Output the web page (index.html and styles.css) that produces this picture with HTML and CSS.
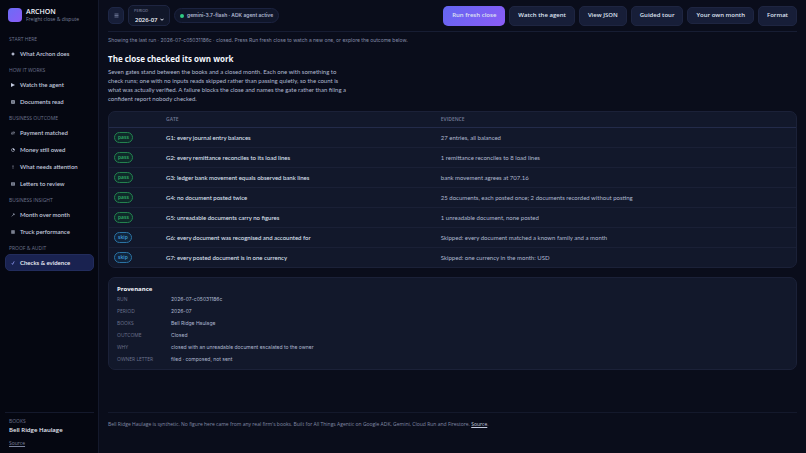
FILE: index.html
```html
<!DOCTYPE html>
<html lang="en">
<head>
  <meta charset="UTF-8">
  <meta name="viewport" content="width=device-width, initial-scale=1.0">
  <title>Archon - Checks &amp; evidence</title>
  <link rel="stylesheet" href="styles.css">
</head>
<body>
  <aside class="sidebar">
    <div class="brand">
      <span class="brand-mark"></span>
      <div>
        <div class="brand-name">ARCHON</div>
        <div class="brand-sub">Freight close &amp; dispute</div>
      </div>
    </div>

    <nav class="nav">
      <div class="nav-label">Start here</div>
      <a class="nav-item" href="#about"><svg viewBox="0 0 10 10"><path d="M5 0l1.800 3.200L10 5 6.800 6.800 5 10 3.200 6.800 0 5l3.200-1.800z" fill="currentColor"/></svg>What Archon does</a>
      <div class="nav-label">How it works</div>
      <a class="nav-item" href="#agent"><svg viewBox="0 0 10 10"><path d="M0 0l10 5-10 5z" fill="currentColor"/></svg>Watch the agent</a>
      <a class="nav-item" href="#documents"><svg viewBox="0 0 10 10"><path d="M1 1.500h8v7H1zM1 5h8M5 1.500v7" fill="none" stroke="currentColor" stroke-width="1.600"/></svg>Documents read</a>
      <div class="nav-label">Business outcome</div>
      <a class="nav-item" href="#payment"><svg viewBox="0 0 10 10"><path d="M1 3.300h8M7 1.300l2 2-2 2M9 7H1M3 5L1 7l2 2" fill="none" stroke="currentColor" stroke-width="1.200"/></svg>Payment matched</a>
      <a class="nav-item" href="#owed"><svg viewBox="0 0 10 10"><circle cx="5" cy="5" r="3.800" fill="none" stroke="currentColor" stroke-width="1.400"/><path d="M5 1v4h4a4 4 0 0 0-4-4z" fill="currentColor"/></svg>Money still owed</a>
      <a class="nav-item" href="#attention"><svg viewBox="0 0 10 10"><path d="M5 1v5.500M5 7.800V9.300" fill="none" stroke="currentColor" stroke-width="1.500"/></svg>What needs attention</a>
      <a class="nav-item" href="#letters"><svg viewBox="0 0 10 10"><path d="M1 1.500h8v7H1zM1 3.800h8M1 6.200h8" fill="none" stroke="currentColor" stroke-width="1.300"/></svg>Letters to review</a>
      <div class="nav-label">Business insight</div>
      <a class="nav-item" href="#months"><svg viewBox="0 0 10 10"><path d="M2 8.500l6-6M4.800 2H8v3.200" fill="none" stroke="currentColor" stroke-width="1.400"/></svg>Month over month</a>
      <a class="nav-item" href="#trucks"><svg viewBox="0 0 10 10"><path d="M1 1h8v8H1zM1 3.700h8M1 6.300h8M3.700 1v8M6.300 1v8" fill="none" stroke="currentColor"/></svg>Truck performance</a>
      <div class="nav-label">Proof &amp; audit</div>
      <a class="nav-item active" href="#checks"><svg viewBox="0 0 10 10"><path d="M2 5.500L4 8.500 8 1" fill="none" stroke="currentColor" stroke-width="1.800"/></svg>Checks &amp; evidence</a>
    </nav>

    <div class="side-foot">
      <div class="side-label">Books</div>
      <div class="side-name">Bell Ridge Haulage</div>
      <a class="side-link" href="#source">Source</a>
    </div>
  </aside>

  <main class="main">
    <header class="topbar">
      <button class="menu" type="button" aria-label="Menu"><svg viewBox="0 0 10 10"><path d="M1 2h8M1 5h8M1 8h8" stroke="currentColor" stroke-width="1.500"/></svg></button>
      <div class="period">
        <label for="period">Period</label>
        <div class="period-row">
          <select id="period">
            <option>2026-07</option>
          </select>
          <svg viewBox="0 0 10 10"><path d="M1 3l4 4 4-4" fill="none" stroke="currentColor" stroke-width="2.500"/></svg>
        </div>
      </div>
      <div class="agent"><span class="dot"></span>gemini-3.7-flash · ADK agent active</div>
      <div class="actions">
        <button class="btn primary" type="button">Run fresh close</button>
        <button class="btn" type="button">Watch the agent</button>
        <button class="btn" type="button">View JSON</button>
        <button class="btn" type="button">Guided tour</button>
        <a class="btn btn-link" href="#own-month">Your own month</a>
        <button class="btn" type="button">Format</button>
      </div>
    </header>

    <p class="status">Showing the last run · 2026-07-c05031186c · closed. Press Run fresh close to watch a new one, or explore the outcome below.</p>

    <h1>The close checked its own work</h1>
    <p class="lead">Seven gates stand between the books and a closed month. Each one with something to check runs; one with no inputs reads skipped rather than passing quietly, so the count is what was actually verified. A failure blocks the close and names the gate rather than filing a confident report nobody checked.</p>

    <div class="card">
      <table class="gates">
        <thead>
          <tr><th class="col-state"></th><th class="col-gate">Gate</th><th>Evidence</th></tr>
        </thead>
        <tbody>
          <tr><td><span class="pill pass">pass</span></td><td class="gate">G1: every journal entry balances</td><td>27 entries, all balanced</td></tr>
          <tr><td><span class="pill pass">pass</span></td><td class="gate">G2: every remittance reconciles to its load lines</td><td>1 remittance reconciles to 8 load lines</td></tr>
          <tr><td><span class="pill pass">pass</span></td><td class="gate">G3: ledger bank movement equals observed bank lines</td><td>bank movement agrees at 707.16</td></tr>
          <tr><td><span class="pill pass">pass</span></td><td class="gate">G4: no document posted twice</td><td>25 documents, each posted once; 2 documents recorded without posting</td></tr>
          <tr><td><span class="pill pass">pass</span></td><td class="gate">G5: unreadable documents carry no figures</td><td>1 unreadable document, none posted</td></tr>
          <tr><td><span class="pill skip">skip</span></td><td class="gate">G6: every document was recognised and accounted for</td><td>Skipped: every document matched a known family and a month</td></tr>
          <tr><td><span class="pill skip">skip</span></td><td class="gate">G7: every posted document is in one currency</td><td>Skipped: one currency in the month: USD</td></tr>
        </tbody>
      </table>
    </div>

    <section class="card provenance">
      <h2>Provenance</h2>
      <dl>
        <dt>Run</dt><dd>2026-07-c05031186c</dd>
        <dt>Period</dt><dd>2026-07</dd>
        <dt>Books</dt><dd>Bell Ridge Haulage</dd>
        <dt>Outcome</dt><dd>Closed</dd>
        <dt>Why</dt><dd>closed with an unreadable document escalated to the owner</dd>
        <dt>Owner letter</dt><dd>filed · composed, not sent</dd>
      </dl>
    </section>

    <footer class="footer">Bell Ridge Haulage is synthetic. No figure here came from any real firm's books. Built for All Things Agentic on Google ADK, Gemini, Cloud Run and Firestore. <a href="#source">Source</a>.</footer>
  </main>
</body>
</html>
```
FILE: styles.css
```css
* {
  box-sizing: border-box;
}
body {
  margin: 0;
  min-height: 100vh;
  display: flex;
  font-family: "Open Sans", sans-serif;
  font-size: 5px;
  line-height: 9px;
  color: #b0b8d0;
  background: #0a0d1b;
}
h1, h2, p, dl, dd {
  margin: 0;
}
a {
  color: inherit;
}
button, select {
  font-family: inherit;
}
.agent, .status, .provenance dd {
  font-family: Inter, sans-serif;
}
.nav-item, .lead, .gates td {
  font-family: Lato, sans-serif;
  font-size: 6px;
}

/* sidebar */
.sidebar {
  width: 99px;
  flex-shrink: 0;
  display: flex;
  flex-direction: column;
  padding: 7px 4px 5px 5px;
  background: #050711;
  border-right: 1px solid #14192c;
}
.brand {
  display: flex;
  align-items: center;
  gap: 4px;
  height: 16px;
  padding-left: 3px;
}
.brand-mark {
  width: 14px;
  height: 14px;
  border-radius: 4px;
  background: linear-gradient(135deg, #6b6cf6, #8b5cf6);
}
.brand-name {
  font-size: 7px;
  line-height: 8px;
  font-weight: 600;
  color: #f1f3fb;
}
.brand-sub {
  line-height: 7px;
  color: #7b839d;
}
.nav {
  margin-top: 8px;
}
.nav-label {
  height: 14px;
  padding: 5px 4px 0;
  line-height: 6px;
  text-transform: uppercase;
  color: #6b728d;
}
.nav-item {
  display: flex;
  align-items: center;
  gap: 5px;
  height: 17px;
  padding: 0 5px;
  border: 1px solid transparent;
  border-radius: 5px;
  font-weight: 600;
  color: #c2c9de;
  text-decoration: none;
}
.nav-item svg {
  width: 4px;
  height: 4px;
}
.nav-item.active {
  color: #f1f3fb;
  background: #192250;
  border-color: #222c5c;
}
.nav-item.active svg {
  color: #98a2ff;
}
.side-foot {
  margin-top: auto;
  padding: 5px 4px 0;
  border-top: 1px solid #14192c;
}
.side-label {
  line-height: 7px;
  text-transform: uppercase;
  color: #6b728d;
}
.side-name {
  font-size: 6px;
  line-height: 10px;
  font-weight: 600;
  color: #e6e9f5;
}
.side-link {
  display: block;
  margin-top: 4px;
  color: #7b839d;
}

/* main column */
.main {
  flex: 1;
  min-width: 0;
  display: flex;
  flex-direction: column;
  padding: 0 9px 24px;
}
.topbar {
  display: flex;
  align-items: center;
  gap: 4px;
  height: 32px;
  border-bottom: 1px solid #171d33;
}
.menu {
  display: grid;
  place-items: center;
  width: 16px;
  height: 17px;
  padding: 0;
  color: #7f88a8;
  background: #171e38;
  border: 1px solid #1e2746;
  border-radius: 5px;
}
.menu svg {
  width: 5px;
  height: 5px;
}
.period {
  width: 42px;
  height: 21px;
  padding: 1px 5px;
  background: #11172a;
  border: 1px solid #1e2541;
  border-radius: 5px;
}
.period label {
  display: block;
  font-size: 4px;
  line-height: 8px;
  text-transform: uppercase;
  color: #8a92ad;
}
.period-row {
  display: flex;
  align-items: center;
  gap: 2px;
  padding-left: 1px;
  color: #eef0fa;
}
.period-row svg {
  width: 5px;
  height: 5px;
}
.period select {
  appearance: none;
  height: 9px;
  padding: 0;
  font-size: 6px;
  font-weight: 600;
  color: inherit;
  background: none;
  border: 0;
}
.agent {
  display: flex;
  align-items: center;
  gap: 3px;
  height: 15px;
  padding: 0 5px;
  font-weight: 600;
  white-space: nowrap;
  background: #10162a;
  border: 1px solid #1c2340;
  border-radius: 8px;
}
.dot {
  width: 4px;
  height: 4px;
  border-radius: 50%;
  background: #2fcb83;
}
.actions {
  display: flex;
  align-items: center;
  gap: 4px;
  margin-left: auto;
}
.btn {
  height: 20px;
  padding: 0 8px;
  font-size: 6px;
  line-height: 9px;
  font-weight: 600;
  white-space: nowrap;
  color: #dfe3f2;
  background: #171e38;
  border: 1px solid #1e2541;
  border-radius: 5px;
}
.btn-link {
  height: 17px;
  padding-top: 3px;
  text-decoration: none;
}
.btn.primary {
  background: linear-gradient(135deg, #6366f1, #8b5cf6);
  border: 0;
  padding: 0 9px;
}
.status {
  margin-top: 4px;
  color: #838ba6;
}
h1 {
  margin-top: 8px;
  font-size: 8px;
  line-height: 12px;
  color: #f4f6fd;
}
.lead {
  max-width: 240px;
  margin-top: 2px;
}
.card {
  background: #12182b;
  border: 1px solid #1b2138;
  border-radius: 7px;
}

/* gates table */
.lead + .card {
  margin-top: 8px;
}
.gates {
  width: 100%;
  border-collapse: collapse;
  table-layout: fixed;
}
.gates th {
  height: 15px;
  padding: 0 5px;
  line-height: 7px;
  font-weight: 600;
  text-align: left;
  text-transform: uppercase;
  color: #737b96;
  border-bottom: 1px solid #232b4a;
}
.gates td {
  height: 20px;
  padding: 0 5px;
  border-bottom: 1px solid #1a2036;
}
.gates tr:last-child td {
  border-bottom: 0;
}
.gates .gate {
  font-weight: 500;
  color: #dfe3f2;
}
.col-state {
  width: 52px;
}
.col-gate {
  width: 40%;
}
.pill {
  display: inline-block;
  padding: 0 3px;
  font-family: "Open Sans", sans-serif;
  font-size: 5px;
  font-weight: 600;
  border: 1px solid;
  border-radius: 6px;
  vertical-align: middle;
}
.pass {
  color: #2fae68;
  background: #0f2a2a;
  border-color: #23824f;
}
.skip {
  color: #3f9fdc;
  background: #11253d;
  border-color: #2b73a3;
}

/* provenance */
.provenance {
  margin-top: 9px;
  padding: 7px 8px 4px;
}
.provenance h2 {
  font-size: 6px;
  line-height: 8px;
  color: #f4f6fd;
}
.provenance dl {
  display: grid;
  grid-template-columns: 52px 1fr;
  column-gap: 2px;
  line-height: 12px;
}
.provenance dt {
  text-transform: uppercase;
  color: #6b728d;
}

.footer {
  margin-top: auto;
  padding-top: 7px;
  border-top: 1px solid #14192c;
  color: #838ba6;
}
.footer a {
  color: #c2c9de;
}
```
